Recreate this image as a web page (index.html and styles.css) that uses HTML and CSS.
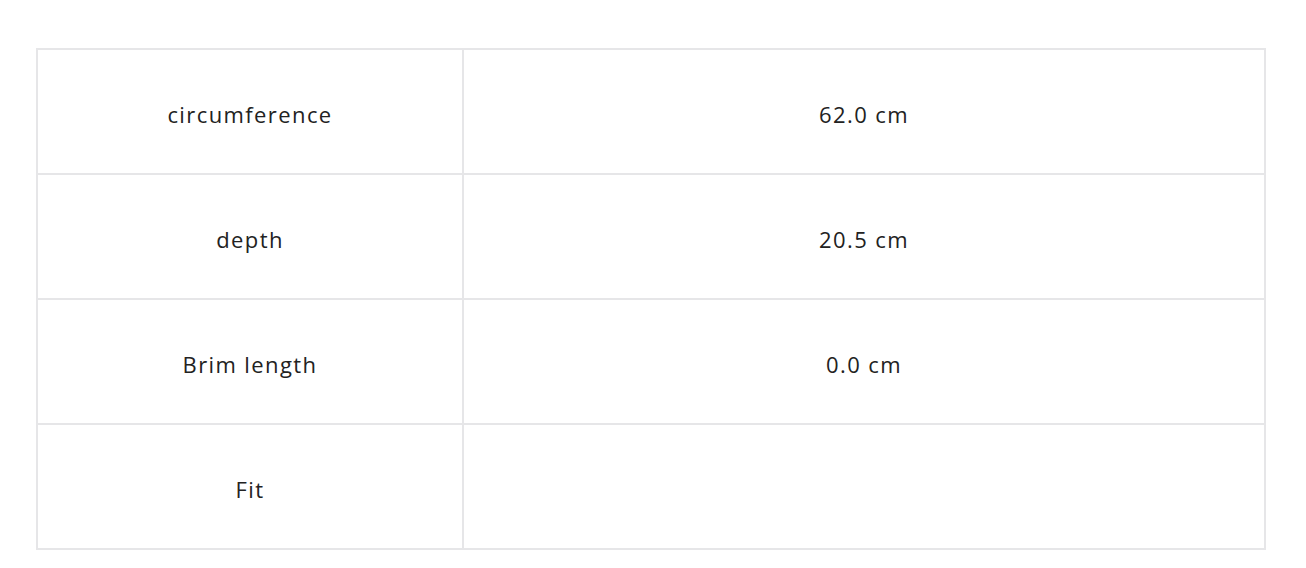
FILE: index.html
```html
<!DOCTYPE html>
<html>
<head>
<meta charset="utf-8">
<link rel="stylesheet" href="styles.css">
</head>
<body>
<div class="wrap">
<table class="spec">
<tbody>
<tr><td class="label">circumference</td><td class="value">62.0 cm</td></tr>
<tr><td class="label">depth</td><td class="value">20.5 cm</td></tr>
<tr><td class="label">Brim length</td><td class="value">0.0 cm</td></tr>
<tr><td class="label">Fit</td><td class="value"></td></tr>
</tbody>
</table>
</div>
</body>
</html>
```
FILE: styles.css
```css
html, body { margin: 0; padding: 0; background: #fff; }
.wrap { padding: 48px 40px 0 36px; }
.spec {
  width: 1230px;
  border-collapse: collapse;
  font-family: "Open Sans", "Liberation Sans", sans-serif;
  font-size: 22px;
  letter-spacing: 1.4px;
  color: #222;
}
.spec td {
  border: 2px solid #e6e6e8;
  height: 125px;
  padding: 5px 0 0 0;
  box-sizing: border-box;
  text-align: center;
  vertical-align: middle;
}
.spec .label { width: 426px; }
```
